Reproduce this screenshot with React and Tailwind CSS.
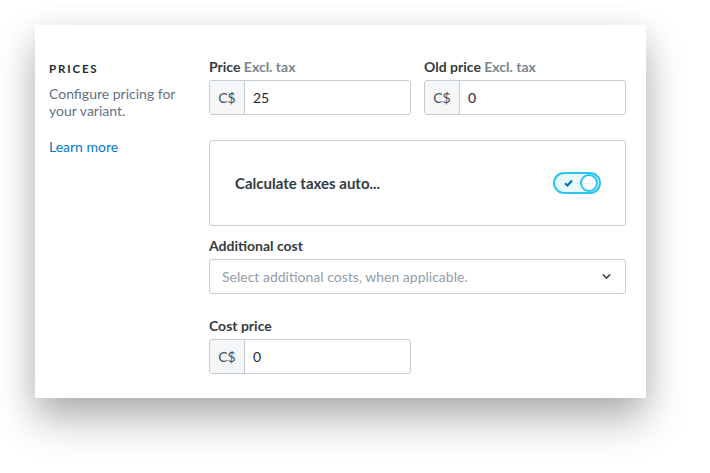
import { ChevronDown } from "lucide-react";

const Prefixed = ({ value }) => (
    <div className="flex h-[35px] rounded-[3px] border border-[#c4cdd5] bg-white overflow-hidden">
        <div className="flex w-[35px] items-center justify-center border-r border-[#c4cdd5] bg-[#f4f6f8] text-[14px] text-[#454f5b]">
            C$
        </div>
        <div className="flex flex-1 items-center pl-[8px] text-[14px] text-[#212b36]">{value}</div>
    </div>
);

const Label = ({ children, hint }) => (
    <p className="mb-[3px] h-[20px] text-[14px] leading-[20px] font-bold text-[#333b42]">
        {children}
        {hint && <span className="text-[#7a858f]"> {hint}</span>}
    </p>
);

export default function App() {
    return (
        <div
            className="min-h-[473px] w-[710px] bg-white pt-[25px] pl-[35px]"
            style={{ fontFamily: "Lato, 'Open Sans', sans-serif" }}
        >
            <div className="flex w-[611px] bg-white pt-[32px] pb-[24px] pl-[14px] shadow-[0_22px_38px_rgba(0,0,0,0.28),0_4px_30px_rgba(0,0,0,0.08)]">
                <div className="w-[160px] shrink-0">
                    <p className="mt-[2px] h-[20px] text-[11.5px] leading-[20px] font-bold tracking-[0.16em] text-[#212b36]">
                        PRICES
                    </p>
                    <p className="mt-[6px] w-[140px] text-[14px] leading-[17px] text-[#637381]">
                        Configure pricing for your variant.
                    </p>
                    <p className="mt-[19px] text-[14px] leading-[17px] text-[#007ace]">Learn more</p>
                </div>

                <div className="w-[417px]">
                    <div className="grid grid-cols-2 gap-x-[13px]">
                        <div>
                            <Label hint="Excl. tax">Price</Label>
                            <Prefixed value="25" />
                        </div>
                        <div>
                            <Label hint="Excl. tax">Old price</Label>
                            <Prefixed value="0" />
                        </div>
                    </div>

                    <div className="mt-[25px] flex h-[86px] items-center justify-between rounded-[3px] border border-[#c4cdd5] pl-[25px] pr-[24px]">
                        <span className="text-[15px] font-bold text-[#333b42]">Calculate taxes auto...</span>
                        <div className="flex h-[22px] w-[48px] items-center justify-between rounded-full border-2 border-[#29c5ee] bg-[#e8f9fd] pl-[9px] pr-[1px]">
                            <svg width="9" height="8" viewBox="0 0 9 8">
                                <path d="M1 4.2 L3.5 6.5 L8 1.5" fill="none" stroke="#006fbb" strokeWidth="2" />
                            </svg>
                            <div className="flex h-[18px] w-[18px] items-center justify-center rounded-full border-2 border-[#29c5ee] bg-white">
                                <span className="text-[7px] leading-none tracking-[1px] text-[#c4cdd5]">····</span>
                            </div>
                        </div>
                    </div>

                    <div className="mt-[10px]">
                        <Label>Additional cost</Label>
                        <div className="flex h-[35px] items-center justify-between rounded-[3px] border border-[#c4cdd5] pl-[12px] pr-[12px]">
                            <span className="text-[14px] text-[#919eab]">Select additional costs, when applicable.</span>
                            <ChevronDown size={13} strokeWidth={3} className="text-[#454f5b]" />
                        </div>
                    </div>

                    <div className="mt-[22px] w-[202px]">
                        <Label>Cost price</Label>
                        <Prefixed value="0" />
                    </div>
                </div>
            </div>
        </div>
    );
}
